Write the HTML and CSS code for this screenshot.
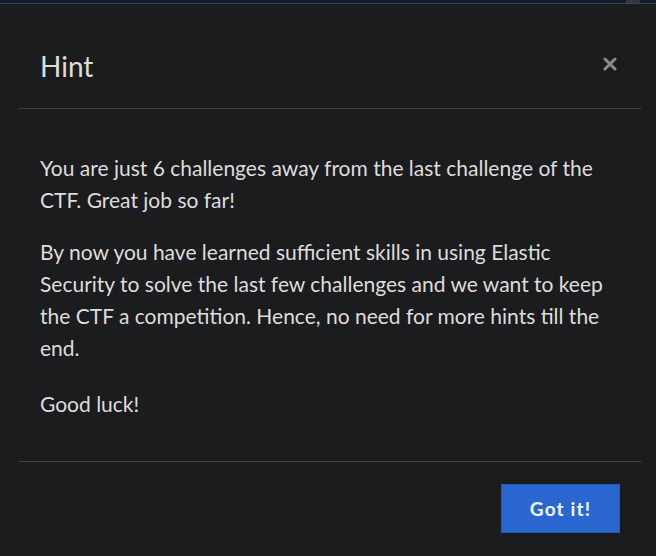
FILE: index.html
```html
<!DOCTYPE html>
<html lang="en">
<head>
<meta charset="utf-8">
<title>Hint</title>
<link rel="stylesheet" href="styles.css">
</head>
<body>
<div class="topbar"><span class="topbar-tab"></span></div>
<div class="modal">
  <div class="modal-header">
    <h2 class="modal-title">Hint</h2>
    <button class="modal-close" aria-label="Close">
      <svg width="14" height="14" viewBox="0 0 14 14"><path d="M2 2 L12 12 M12 2 L2 12" stroke="#8c8c8c" stroke-width="3" stroke-linecap="round"/></svg>
    </button>
  </div>
  <div class="modal-body">
    <p>You are just 6 challenges away from the last challenge of the CTF. Great job so far!</p>
    <p>By now you have learned sufficient skills in using Elastic Security to solve the last few challenges and we want to keep the CTF a competition. Hence, no need for more hints till the end.</p>
    <p class="closing">Good luck!</p>
  </div>
  <div class="modal-footer">
    <button class="btn-primary">Got it!</button>
  </div>
</div>
</body>
</html>
```

FILE: styles.css
```css
html, body {
  margin: 0;
  padding: 0;
  background: #1b1c1e;
  font-family: Lato, "Liberation Sans", sans-serif;
  color: #dedddb;
}
.topbar {
  height: 3px;
  background: #121c31;
  border-bottom: 1px solid #3d4250;
  display: flex;
  justify-content: flex-end;
  padding-right: 16px;
}
.topbar-tab {
  width: 14px;
  height: 3px;
  background: #34373c;
}
.modal {
  display: flex;
  flex-direction: column;
}
.modal-header {
  margin: 0 15px 0 19px;
  padding: 46px 24px 24px 21px;
  border-bottom: 1px solid #414244;
  display: flex;
  align-items: flex-start;
  justify-content: space-between;
}
.modal-title {
  margin: 0;
  font-size: 28px;
  font-weight: 400;
  line-height: 1.2;
  color: #dedddb;
}
.modal-close {
  background: none;
  border: 0;
  padding: 0;
  margin: 7px 0 0 0;
  width: 14px;
  height: 14px;
  cursor: pointer;
  display: block;
}
.modal-close svg { display: block; }
.modal-body {
  padding: 43px 40px 41px 40px;
  font-size: 21px;
  line-height: 32px;
}
.modal-body p {
  margin: 0 0 20px 0;
}
.modal-body p.closing {
  margin: 24px 0 0 0;
}
.modal-footer {
  margin: 0 15px 0 19px;
  border-top: 1px solid #414244;
  padding: 22px 21px 0 0;
  display: flex;
  justify-content: flex-end;
}
.btn-primary {
  width: 119px;
  height: 49px;
  background: #2a66d0;
  border: 1px solid #2558b5;
  color: #f2f4f8;
  font-family: Lato, "Liberation Sans", sans-serif;
  font-weight: 700;
  font-size: 19px;
  letter-spacing: 0.06em;
  border-radius: 0;
  cursor: pointer;
  padding: 0;
}
```
